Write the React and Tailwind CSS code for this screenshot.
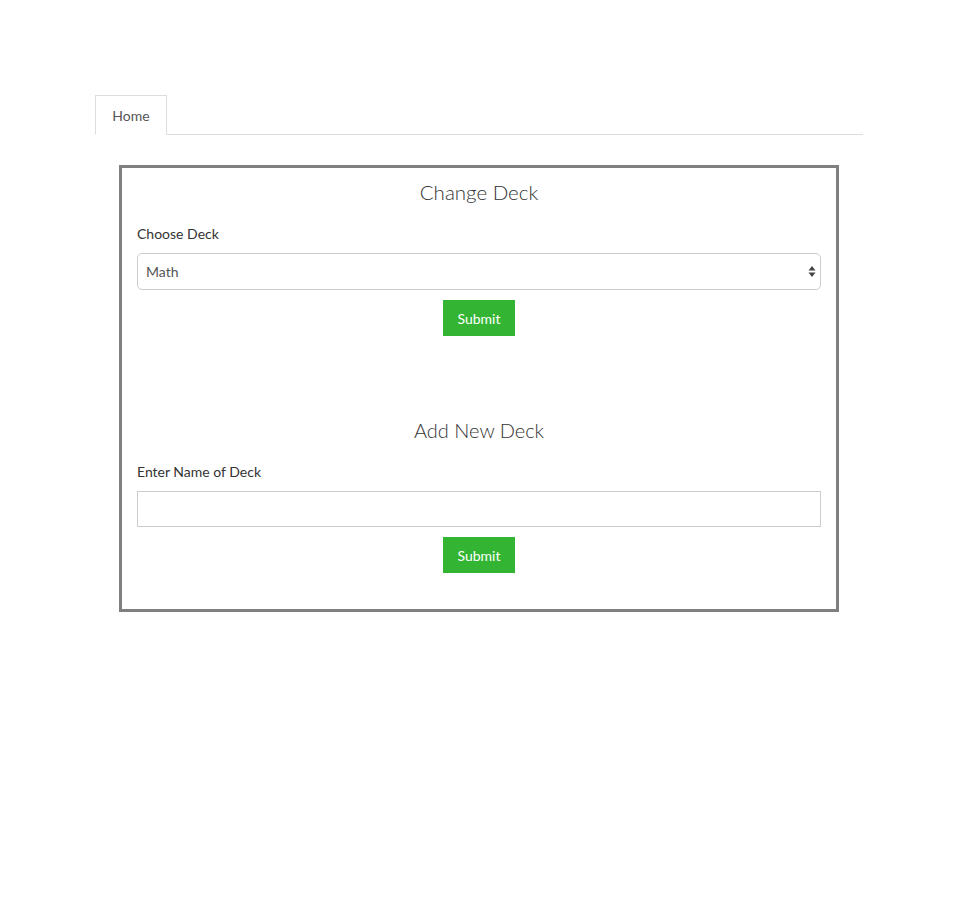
import React, { useState } from "react";

const App = () => {
  const [deck, setDeck] = useState("Math");
  const [newDeck, setNewDeck] = useState("");

  return (
    <div
      className="min-h-[911px] bg-white text-[#333]"
      style={{ fontFamily: "Lato, 'Open Sans', sans-serif" }}
    >
      <div className="w-[768px] ml-[95px] pt-[95px]">
        {/* Tabs */}
        <div className="flex border-b border-[#ddd]">
          <div className="h-[40px] w-[72px] -mb-px border border-[#ddd] border-b-white bg-white flex items-center justify-center text-[14px] text-[#555]">
            Home
          </div>
        </div>

        {/* Deck panel */}
        <div className="mt-[30px] ml-[24px] w-[720px] border-[3px] border-[#808080] px-[15px] pt-[9px] pb-[36px]">
          <h3 className="text-center text-[20.5px] font-light text-[#333] leading-[30px]">
            Change Deck
          </h3>
          <label className="block mt-[17px] text-[14px] text-[#333] leading-[20px]">
            Choose Deck
          </label>
          <div className="relative mt-[9px]">
            <select
              value={deck}
              onChange={(e) => setDeck(e.target.value)}
              className="appearance-none w-full h-[37px] border border-[#ccc] rounded-[5px] bg-white px-[8px] text-[14px] text-[#555]"
            >
              <option>Math</option>
              <option>Science</option>
              <option>History</option>
            </select>
            <svg
              className="absolute right-[5px] top-[12px]"
              width="8"
              height="13"
              viewBox="0 0 8 13"
            >
              <path d="M4 1 L7.5 5.5 H0.5 Z" fill="#444" />
              <path d="M4 12 L7.5 7.5 H0.5 Z" fill="#444" />
            </svg>
          </div>
          <div className="flex justify-center mt-[10px]">
            <button className="w-[72px] h-[36px] bg-[#33b533] text-white text-[14px]">
              Submit
            </button>
          </div>

          <h3 className="mt-[79px] text-center text-[20px] font-light text-[#333] leading-[30px]">
            Add New Deck
          </h3>
          <label className="block mt-[17px] text-[14px] text-[#333] leading-[20px]">
            Enter Name of Deck
          </label>
          <input
            value={newDeck}
            onChange={(e) => setNewDeck(e.target.value)}
            className="block mt-[9px] w-full h-[36px] border border-[#ccc] bg-white px-[8px] text-[14px]"
          />
          <div className="flex justify-center mt-[10px]">
            <button className="w-[72px] h-[36px] bg-[#33b533] text-white text-[14px]">
              Submit
            </button>
          </div>
        </div>
      </div>
    </div>
  );
};

export default App;
